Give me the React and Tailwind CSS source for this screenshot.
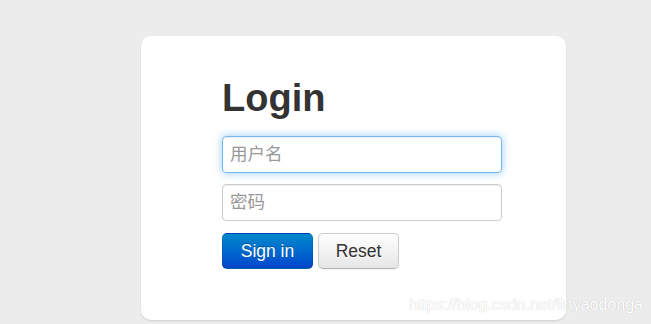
import { useState } from 'react'

const FONT = "font-['Liberation_Sans','Noto_Sans_CJK_SC',sans-serif]"

export default function App() {
  const [user, setUser] = useState('')
  const [pass, setPass] = useState('')

  return (
    <div className={`relative h-[324px] w-full overflow-hidden bg-[#ececec] ${FONT}`}>
      <div className="pt-[36px] pl-[141px]">
        {/* Card */}
        <div className="h-[284px] w-[425px] rounded-[10px] bg-white pl-[81px] pt-[42px] shadow-[0_1px_2px_rgba(0,0,0,0.12)]">
          <h1 className="m-0 h-[40px] text-[38px] font-bold leading-[40px] text-[#333]">Login</h1>

          <form className="mt-[18px] flex flex-col" onSubmit={e => e.preventDefault()}>
            <input
              type="text"
              value={user}
              onChange={e => setUser(e.target.value)}
              placeholder="用户名"
              className="h-[37px] w-[280px] rounded-[4px] border border-[rgba(82,168,236,0.8)] px-[7px] text-[17.5px] text-[#555] outline-none shadow-[inset_0_1px_1px_rgba(0,0,0,0.075),0_0_8px_rgba(82,168,236,0.6)] placeholder:text-[#999]"
            />
            <input
              type="password"
              value={pass}
              onChange={e => setPass(e.target.value)}
              placeholder="密码"
              className="mt-[11px] h-[37px] w-[280px] rounded-[4px] border border-[#ccc] px-[7px] text-[17.5px] text-[#555] outline-none shadow-[inset_0_1px_1px_rgba(0,0,0,0.075)] placeholder:text-[#999]"
            />

            <div className="mt-[12px] flex gap-[5px]">
              <button
                type="submit"
                className="flex h-[36px] w-[91px] items-center justify-center rounded-[5px] border border-[rgba(0,0,0,0.1)] border-b-[rgba(0,0,0,0.25)] bg-gradient-to-b from-[#0088cc] to-[#0044cc] text-[17.5px] text-white [text-shadow:0_-1px_0_rgba(0,0,0,0.25)]"
              >
                Sign in
              </button>
              <button
                type="button"
                onClick={() => { setUser(''); setPass('') }}
                className="flex h-[36px] w-[81px] items-center justify-center rounded-[5px] border border-[#ccc] border-b-[#b3b3b3] bg-gradient-to-b from-white to-[#e6e6e6] text-[17.5px] text-[#333] shadow-[inset_0_1px_0_rgba(255,255,255,0.2),0_1px_2px_rgba(0,0,0,0.05)] [text-shadow:0_1px_1px_rgba(255,255,255,0.75)]"
              >
                Reset
              </button>
            </div>
          </form>
        </div>
      </div>

      {/* Watermark */}
      <span className="pointer-events-none absolute left-[409px] top-[297px] text-[16px] leading-4 whitespace-nowrap text-white [text-shadow:0_0_1px_rgba(0,0,0,0.25)]">
        https://blog.csdn.net/linyaodonga
      </span>
    </div>
  )
}
